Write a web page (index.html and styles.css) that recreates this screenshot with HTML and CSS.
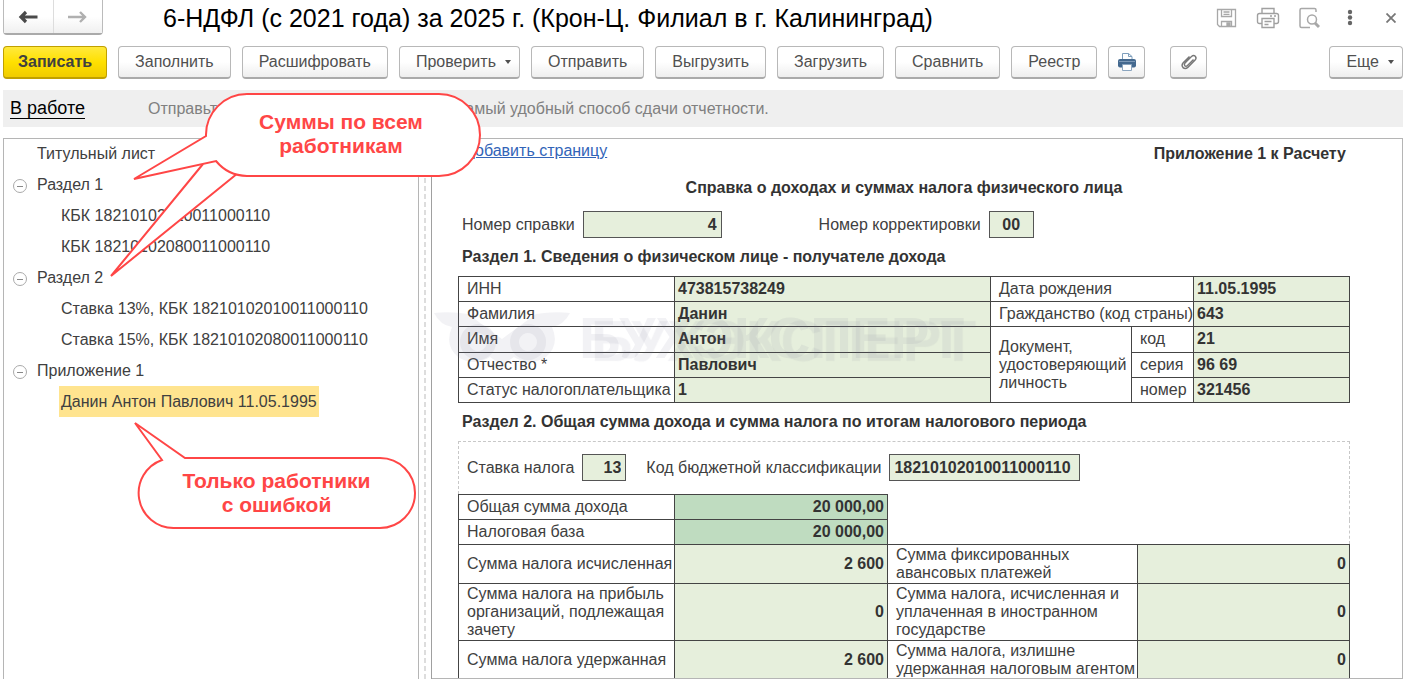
FILE: index.html
```
<!DOCTYPE html>
<html lang="ru">
<head>
    <meta charset="UTF-8">
    <title>6-НДФЛ</title>
    <link rel="stylesheet" href="styles.css">
</head>
<body>
    <header class="titlebar">
        <div class="nav">
            <button class="navbtn" type="button" aria-label="Назад">
                <svg width="20" height="14" viewBox="0 0 20 14"><path d="M19.500 7H4M8 2L3 7l5 5" fill="none" stroke="#4a4a4a" stroke-width="3.200"/></svg>
            </button>
            <button class="navbtn" type="button" aria-label="Вперед">
                <svg width="20" height="14" viewBox="0 0 20 14"><path d="M0 7h17M12 2l5 5-5 5" fill="none" stroke="#b0b0b0" stroke-width="2.400"/></svg>
            </button>
        </div>
        <h1 class="title">6-НДФЛ (с 2021 года) за 2025 г. (Крон-Ц. Филиал в г. Калининград)</h1>
        <div class="tools">
            <button class="tool" type="button" aria-label="Сохранить">
                <svg width="22" height="22" viewBox="0 0 22 22" fill="none" stroke="#a8a8a8" stroke-width="1.3"><path d="M1.500 2.500h18v17h-16l-2-2zM5.500 2.500v7h10v-7M7.500 5h6M7.500 7.300h6M5.500 19.500v-5h10v5"/><path d="M11 16h3v3h-3z" fill="#a8a8a8"/></svg>
            </button>
            <button class="tool" type="button" aria-label="Печать">
                <svg width="24" height="22" viewBox="0 0 24 22" fill="none" stroke="#a0a0a0" stroke-width="1.4"><path d="M6 6V1.500h12V6M6 16.500H3.500q-2 0-2-2V8.500q0-2 2-2h17q2 0 2 2v6q0 2-2 2H18M6 11.500h12v9H6zM8.500 14.500h7M8.500 17.500h4M14 9h2M18 9h2"/></svg>
            </button>
            <button class="tool" type="button" aria-label="Просмотр">
                <svg width="22" height="22" viewBox="0 0 22 22" fill="none" stroke="#a8a8a8" stroke-width="1.5"><path d="M18 5V3q0-1.500-1.500-1.500h-13Q2 1.500 2 3v16q0 1.500 1.500 1.500H12"/><circle cx="14" cy="12.500" r="4.500"/><path d="M17 16l4 4" stroke-width="3"/></svg>
            </button>
            <button class="tool more" type="button" aria-label="Меню">
                <svg width="6" height="18" viewBox="0 0 6 18" fill="#666"><circle cx="3" cy="3" r="2.200"/><circle cx="3" cy="8.500" r="2.200"/><circle cx="3" cy="14" r="2.200"/></svg>
            </button>
            <button class="tool close" type="button" aria-label="Закрыть">
                <svg width="10" height="10" viewBox="0 0 10 10"><path d="M.500.500l9 9M9.500.500l-9 9" stroke="#777" stroke-width="1.800"/></svg>
            </button>
        </div>
    </header>

    <div class="toolbar">
        <button class="btn primary" type="button">Записать</button>
        <button class="btn" type="button">Заполнить</button>
        <button class="btn" type="button">Расшифровать</button>
        <button class="btn drop" type="button">Проверить <span class="arrow"></span></button>
        <button class="btn" type="button">Отправить</button>
        <button class="btn" type="button">Выгрузить</button>
        <button class="btn" type="button">Загрузить</button>
        <button class="btn" type="button">Сравнить</button>
        <button class="btn" type="button">Реестр</button>
        <button class="btn icon" type="button" aria-label="Печать">
            <svg width="20" height="20" viewBox="0 0 20 20"><path d="M5.500 9V1.500h6l3.500 3V9" fill="#fff" stroke="#7f9fbd"/><path d="M11.500 1.500v3H15" fill="none" stroke="#7f9fbd"/><path d="M3 7h14q2 0 2 2v4.500q0 2-2 2H3q-2 0-2-2V9q0-2 2-2z" fill="#44698f"/><path d="M2 9.500h16" stroke="#7e9ab8"/><path d="M5.500 12.500h9v6h-9z" fill="#fff" stroke="#8ba5bf"/></svg>
        </button>
        <button class="btn icon clip" type="button" aria-label="Файлы">
            <svg width="18" height="18" viewBox="0 0 18 18" fill="none" stroke="#777" stroke-width="1.400"><path d="M13.500 6.500l-6 6q-1.500 1.300-2.700.2-1-1.200.2-2.700l6.500-6.500q2-1.800 3.800-.3 1.600 1.800-.2 3.900l-7.300 7.300q-2.500 2.200-4.800.2-2-2.300.2-4.800L9.500 3.500"/></svg>
        </button>
        <button class="btn drop last" type="button">Еще <span class="arrow"></span></button>
    </div>

    <div class="status">
        <a class="state" href="#">В работе</a>
        <span class="hint">Отправьте отчетность через Интернет — самый удобный способ сдачи отчетности.</span>
    </div>

    <main class="main">
        <nav class="tree">
            <ul class="list">
                <li class="node">Титульный лист</li>
                <li class="node open">Раздел 1</li>
                <li class="node sub">КБК 18210102010011000110</li>
                <li class="node sub">КБК 18210102080011000110</li>
                <li class="node open">Раздел 2</li>
                <li class="node sub">Ставка 13%, КБК 18210102010011000110</li>
                <li class="node sub">Ставка 15%, КБК 18210102080011000110</li>
                <li class="node open">Приложение 1</li>
                <li class="node sub"><span class="selected">Данин Антон Павлович 11.05.1995</span></li>
            </ul>
        </nav>
        <div class="splitter"></div>
        <section class="sheet">
            <div class="sheethead">
                <a class="add" href="#">Добавить страницу</a>
                <b class="appendix">Приложение 1 к Расчету</b>
            </div>
            <h2 class="heading">Справка о доходах и суммах налога физического лица</h2>
            <div class="fields">
                <label for="num">Номер справки</label>
                <input id="num" class="box num" value="4">
                <label class="second" for="corr">Номер корректировки</label>
                <input id="corr" class="box corr" value="00">
            </div>
            <h3 class="section">Раздел 1. Сведения о физическом лице - получателе дохода</h3>
            <table class="grid person">
                <colgroup><col class="name"><col><col class="doc"><col class="part"><col class="value"></colgroup>
                <tr>
                    <th>ИНН</th><td>473815738249</td>
                    <th colspan="2">Дата рождения</th><td>11.05.1995</td>
                </tr>
                <tr>
                    <th>Фамилия</th><td>Данин</td>
                    <th colspan="2">Гражданство (код страны)</th><td>643</td>
                </tr>
                <tr>
                    <th>Имя</th><td>Антон</td>
                    <th rowspan="3">Документ,<br>удостоверяющий<br>личность</th><th>код</th><td>21</td>
                </tr>
                <tr>
                    <th>Отчество *</th><td>Павлович</td>
                    <th>серия</th><td>96 69</td>
                </tr>
                <tr>
                    <th>Статус налогоплательщика</th><td>1</td>
                    <th>номер</th><td>321456</td>
                </tr>
            </table>
            <h3 class="section">Раздел 2. Общая сумма дохода и сумма налога по итогам налогового периода</h3>
            <div class="block">
                <div class="fields rate">
                    <label for="rate">Ставка налога</label>
                    <input id="rate" class="box pct" value="13">
                    <label class="kbk" for="kbk">Код бюджетной классификации</label>
                    <input id="kbk" class="box code" value="18210102010011000110">
                </div>
            </div>
            <table class="grid sums">
                <colgroup><col class="name"><col class="sum"><col class="extra"><col></colgroup>
                <tr class="low">
                    <th>Общая сумма дохода</th><td class="total">20 000,00</td>
                    <td class="empty" colspan="2" rowspan="2"></td>
                </tr>
                <tr class="low">
                    <th>Налоговая база</th><td class="total">20 000,00</td>
                </tr>
                <tr>
                    <th>Сумма налога исчисленная</th><td>2 600</td>
                    <th>Сумма фиксированных<br>авансовых платежей</th><td>0</td>
                </tr>
                <tr>
                    <th>Сумма налога на прибыль<br>организаций, подлежащая<br>зачету</th><td>0</td>
                    <th>Сумма налога, исчисленная и<br>уплаченная в иностранном<br>государстве</th><td>0</td>
                </tr>
                <tr>
                    <th>Сумма налога удержанная</th><td>2 600</td>
                    <th>Сумма налога, излишне<br>удержанная налоговым агентом</th><td>0</td>
                </tr>
            </table>
            <div class="watermark" aria-hidden="true">
                <svg class="owl" width="136" height="54" viewBox="0 0 136 54">
                    <path d="M0 2Q16 0 34 3L68 28 102 3Q120 0 136 2 130 14 118 16 126 34 112 46 96 56 80 46L68 54 56 46Q40 56 24 46 10 34 18 16 6 14 0 2z"/>
                    <path d="M44 13a18 18 0 1 0 .1 0zM44 22a9 9 0 1 1-.1 0z" fill-rule="evenodd"/>
                    <path d="M94 13a18 18 0 1 0 .1 0zM94 22a9 9 0 1 1-.1 0z" fill-rule="evenodd"/>
                </svg>
                <span class="brand">БУХЭКСПЕРТ</span>
            </div>
        </section>
    </main>

    <div class="callout sumnote">
        <svg class="shape" width="372" height="186" viewBox="0 0 372 186">
            <path d="M94 73L2 185 129 82"/>
            <path d="M97 45A41 41 0 0 1 138 3H330a41 41 0 0 1 0 82H138A41 41 0 0 1 107 70L25 88z"/>
        </svg>
        <p class="note">Суммы по всем<br>работникам</p>
    </div>
    <div class="callout errnote">
        <svg class="shape" width="284" height="108" viewBox="0 0 284 108">
            <path d="M29 39L2 2 52 37H247a35 35 0 0 1 0 70H41A35 35 0 0 1 29 39z"/>
        </svg>
        <p class="note">Только работники<br>с ошибкой</p>
    </div>
</body>
</html>
```
FILE: styles.css
```
* {
    box-sizing: border-box;
}

body {
    margin: 0;
    padding: 0 5px 0 3px;
    height: 100vh;
    display: flex;
    flex-direction: column;
    overflow: hidden;
    position: relative;
    background: #fff;
    color: #404040;
    font: 16px/18px "Liberation Sans", Arial, sans-serif;
}

button, input {
    font: inherit;
    color: inherit;
}

/* title */
.titlebar {
    display: flex;
    align-items: center;
    height: 35px;
    flex: none;
}

.nav {
    display: flex;
    width: 100px;
    height: 35px;
    border: 1px solid #bbb;
    border-top: 0;
    border-bottom: 2px solid #aaa;
    border-radius: 0 0 4px 4px;
}

.navbtn {
    flex: 1;
    padding: 5px 0 0;
    border: 0;
    background: linear-gradient(#fff 50%, #f0f0f0);
}

.navbtn + .navbtn {
    border-left: 1px solid #ddd;
}

.title {
    flex: 1;
    margin: 0 0 0 60px;
    color: #000;
    font-size: 25px;
    font-weight: normal;
    line-height: 34px;
    white-space: nowrap;
}

.tools {
    display: flex;
    align-items: center;
    gap: 18px;
    padding-right: 7px;
}

.tool {
    display: flex;
    padding: 0;
    border: 0;
    background: none;
}

.more {
    margin-left: 9px;
}

.close {
    margin-left: 15px;
}

/* command bar */
.toolbar {
    display: flex;
    gap: 11px;
    margin-top: 11px;
    flex: none;
}

.btn {
    height: 33px;
    padding: 0 16px 1px;
    border: 1px solid #b8b8b8;
    border-bottom: 2px solid #aaa;
    border-radius: 4px;
    background: linear-gradient(#fff 50%, #eee);
    color: #505050;
    white-space: nowrap;
}

.primary {
    padding: 0 14px 1px;
    border-color: #c0a000;
    background: linear-gradient(#ffe93d, #ffe000 50%, #f0cc00);
    color: #404040;
    font-weight: bold;
}

.drop {
    display: flex;
    align-items: center;
    gap: 9px;
    padding-right: 8px;
}

.arrow {
    border: 3px solid transparent;
    border-top: 4px solid #505050;
    border-bottom: 0;
}

.icon {
    display: flex;
    align-items: center;
    justify-content: center;
    width: 37px;
    padding: 0;
}

.clip {
    margin-left: 14px;
}

.last {
    margin-left: auto;
}

/* status */
.status {
    display: flex;
    align-items: center;
    gap: 63px;
    height: 37px;
    margin: 11px 0;
    padding-left: 7px;
    background: #efefef;
    flex: none;
}

.state {
    border-bottom: 1px solid #000;
    color: #000;
    font-size: 18px;
    line-height: 19px;
    text-decoration: none;
}

.hint {
    color: #808080;
    white-space: nowrap;
}

/* panels */
.main {
    display: flex;
    flex: 1;
    min-height: 0;
}

.tree {
    width: 416px;
    border: 1px solid #b5b5b5;
    border-bottom: 0;
    flex: none;
}

.list {
    margin: -1px 0 0;
    padding: 0 0 0 33px;
    list-style: none;
}

.node {
    position: relative;
    line-height: 31px;
    white-space: nowrap;
}

.sub {
    padding-left: 24px;
}

.open::before {
    content: "";
    position: absolute;
    left: -24px;
    top: 10px;
    width: 12px;
    height: 12px;
    border: 1px solid #aaa;
    border-radius: 50%;
    background: linear-gradient(#888, #888) center / 6px 1px no-repeat;
}

.selected {
    display: inline-block;
    margin-left: -2px;
    padding: 0 2px;
    background: #ffe48f;
}

.splitter {
    width: 13px;
    border-right: 1px solid #a0a0a0;
    background: repeating-linear-gradient(#ddd 0 5px, #fff 5px 8px) 5px 0 / 2px 100% no-repeat;
    flex: none;
}

.sheet {
    position: relative;
    flex: 1;
    min-width: 0;
    padding: 3px 52px 0 26px;
    border: 1px solid #b5b5b5;
    border-left: 0;
    overflow: hidden;
}

.sheethead {
    display: flex;
    justify-content: space-between;
    padding: 0 4px 0 6px;
}

.add {
    color: #3264b8;
}

.appendix {
    padding-top: 3px;
    color: #333;
}

.heading, .section {
    margin: 0;
    color: #333;
    font-size: 16px;
    font-weight: bold;
}

.heading {
    margin: 16px 0 14px;
    text-align: center;
}

.section {
    margin: 10px 4px;
}

.fields {
    display: flex;
    align-items: center;
    padding-left: 4px;
}

.box {
    height: 27px;
    margin-left: 8px;
    padding: 0 4px;
    border: 1px solid #555;
    border-radius: 0;
    background: #e6efdc;
    color: #333;
    font-weight: bold;
}

.num {
    width: 139px;
    text-align: right;
}

.second {
    margin-left: 97px;
}

.corr {
    width: 45px;
    text-align: center;
}

.pct {
    width: 44px;
    text-align: right;
}

.kbk {
    margin-left: 20px;
}

.code {
    width: 191px;
}

.block {
    height: 53px;
    border: 1px dashed #c8c8c8;
    border-bottom: 0;
}

.rate {
    padding: 12px 0 0 8px;
}

/* form tables */
.grid {
    width: 100%;
    border-collapse: collapse;
    table-layout: fixed;
}

.grid th, .grid td {
    padding: 1px 3px;
    border: 1px solid #444;
    text-align: left;
}

.grid th {
    padding: 1px 0 1px 8px;
    font-weight: normal;
    white-space: nowrap;
}

.grid td {
    background: #e6efdc;
    color: #333;
    font-weight: bold;
}

.person {
    height: 127px;
}

.name { width: 216px; }
.doc { width: 141px; }
.part { width: 62px; }
.value { width: 156px; }
.sum { width: 213px; }
.extra { width: 250px; }

.sums .low th {
    height: 25px;
}

.sums td {
    text-align: right;
}

.sums .total {
    background: #bfdcc0;
}

.sums .empty {
    border-top: 0;
    border-right: 1px dashed #c8c8c8;
    background: none;
}

.watermark {
    position: absolute;
    left: 2px;
    top: 170px;
    display: flex;
    align-items: center;
    gap: 9px;
    pointer-events: none;
}

.owl {
    fill: rgba(107, 107, 140, .09);
}

.brand {
    color: rgba(107, 107, 140, .09);
    font-size: 58px;
    font-weight: bold;
    line-height: 58px;
    text-shadow: 12px 3px 1px rgba(107, 107, 140, .09);
}

/* callouts */
.callout {
    position: absolute;
    color: #ff4646;
    font-size: 21px;
    font-weight: bold;
    line-height: 24px;
    text-align: center;
}

.shape {
    display: block;
    fill: #fff;
    stroke: #ff4646;
    stroke-width: 2;
}

.note {
    position: absolute;
    margin: 0;
    white-space: nowrap;
}

.sumnote {
    left: 109px;
    top: 91px;
}

.sumnote .note {
    left: 95px;
    right: 3px;
    top: 19px;
}

.errnote {
    left: 133px;
    top: 421px;
}

.errnote .note {
    left: 6px;
    right: 3px;
    top: 48px;
}
```
